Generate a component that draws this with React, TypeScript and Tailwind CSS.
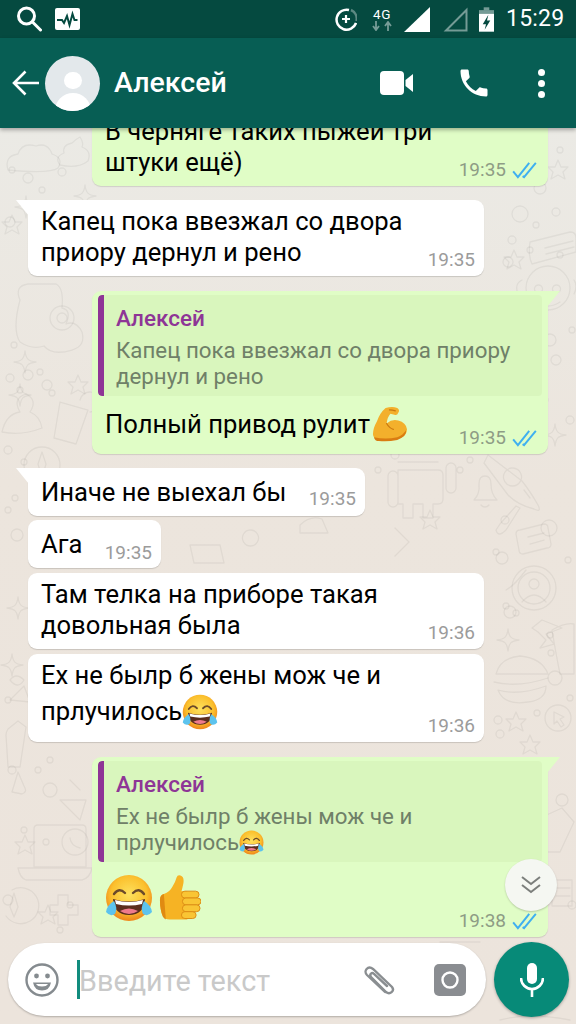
import React, { useId } from "react";

function Joy({ className }: { className: string }) {
  const id = useId();
  return (
    <svg viewBox="0 0 48 48" className={className}>
      <defs>
        <radialGradient id={id} cx="50%" cy="42%" r="56%">
          <stop offset="0%" stopColor="#fde15e" />
          <stop offset="70%" stopColor="#fbc02d" />
          <stop offset="100%" stopColor="#f08a1d" />
        </radialGradient>
      </defs>
      <circle cx="24" cy="24" r="23" fill={`url(#${id})`} />
      <path d="M9 20q5-7 11-1M28 19q6-6 11 1" fill="none" stroke="#6b4a2a" strokeWidth="2.4" strokeLinecap="round" />
      <path d="M8 25q16 5 32 0q-1 16-16 16T8 25z" fill="#5b2e1e" />
      <path d="M10 26q14 4 28 0l-1 4q-13 3-26 0z" fill="#fff" />
      <path d="M15 37q9-5 18 0q-9 6-18 0z" fill="#ef7a8c" />
      <path d="M1 38q1-7 8-11q4 7 1 13q-5 3-9-2z" fill="#5cc3ee" />
      <path d="M47 38q-1-7-8-11q-4 7-1 13q5 3 9-2z" fill="#5cc3ee" />
    </svg>
  );
}

function Thumb({ className }: { className: string }) {
  return (
    <svg viewBox="0 0 44 46" className={className}>
      <path d="M2 25q0-5 4-6q6-2 9-8q3-5 4-9q1-3 4-2q4 1 3 8q-1 5-2 8h6v29H12q-5 0-7-3q-3-7-3-17z" fill="#f6b324" />
      <path d="M2 25q0-5 4-6l2 26q-2-1-3-3q-3-7-3-17z" fill="#e08a12" />
      <rect x="24" y="16" width="18" height="7" rx="3.5" fill="#f9c534" stroke="#dc8c14" />
      <rect x="25" y="23" width="19" height="7" rx="3.5" fill="#f9c534" stroke="#dc8c14" />
      <rect x="25" y="30" width="18" height="7" rx="3.5" fill="#f9c534" stroke="#dc8c14" />
      <rect x="24" y="37" width="15" height="7" rx="3.5" fill="#f9c534" stroke="#dc8c14" />
    </svg>
  );
}

function Muscle({ className }: { className: string }) {
  return (
    <svg viewBox="0 0 36 36" className={className}>
      <path d="M14 1q7-2 12 0q3 2 1 5q-1 3-4 2l-4-1q-3 3-4 10q6-5 12-3q8 2 9 9q0 7-8 9q-11 3-20 2Q1 33 1 28q0-6 4-13q3-9 9-14z" fill="#f3b02c" />
      <path d="M2 31q12 3 24 0q6-2 9-7q1 6-9 10q-10 2-19 1q-4 0-5-4z" fill="#d97c12" />
      <path d="M18 3q3 0 6 1M15 17q3 5 7 6" fill="none" stroke="#c9780f" strokeWidth="1.2" strokeLinecap="round" />
    </svg>
  );
}

function Ticks() {
  return (
    <svg viewBox="0 0 26 18" className="w-[25px] h-[17px] shrink-0">
      <path d="M1 10l5 6L18 1M11 15l1.500 1L25 1" fill="none" stroke="#3fb0f0" strokeWidth="2.100" />
    </svg>
  );
}

function Tail({ side, color }: { side: "l" | "r"; color: string }) {
  return side === "l" ? (
    <span className="absolute left-[-12px] top-0 w-0 h-0 border-t-[16px] border-l-[13px] border-l-transparent" style={{ borderTopColor: color }} />
  ) : (
    <span className="absolute right-[-12px] top-0 w-0 h-0 border-t-[16px] border-r-[13px] border-r-transparent" style={{ borderTopColor: color }} />
  );
}

function InTime({ t }: { t: string }) {
  return <span className="shrink-0 text-[19px] leading-[22px] text-[#9b9b9b] mb-[-3px]">{t}</span>;
}

function OutTime({ t }: { t: string }) {
  return (
    <span className="flex items-center gap-[6px] mr-[2px] shrink-0 text-[19px] leading-[22px] text-[#8e9c85] mb-[-3px]">
      {t}
      <Ticks />
    </span>
  );
}

function Quote({ l1, l2 }: { l1: string; l2: React.ReactNode }) {
  return (
    <div className="flex h-[101px] rounded-[4px] bg-[#d9f6bd] overflow-hidden">
      <div className="w-[6px] bg-[#8e3596] rounded-l-[4px] shrink-0" />
      <div className="pl-[12px] pt-[8px] text-[22.3px] leading-[26px] text-[#6f8068]">
        <div className="text-[#8e3596] font-medium text-[22.5px] leading-[31px] mb-[3px]">Алексей</div>
        <div>{l1}</div>
        <div className="flex items-center h-[26px]">{l2}</div>
      </div>
    </div>
  );
}

const dots: [number, number, number][] = [
  [12, 170, 3],[28, 178, 5],[42, 190, 3],[62, 172, 4],[10, 222, 5],[540, 188, 6],[560, 150, 3],[556, 212, 4],
  [520, 214, 8],[536, 225, 3],[512, 240, 4],[508, 262, 5],[530, 250, 3],[560, 255, 3],[550, 340, 6],[572, 330, 3],[556, 360, 5],
  [14, 345, 3],[10, 378, 4],[28, 375, 5],[47, 385, 5],[52, 393, 3],[20, 390, 3],[40, 372, 3],[545, 400, 3],[570, 420, 4],
  [8, 450, 4],[24, 462, 3],[15, 498, 3],[17, 535, 6],[8, 510, 3],[378, 470, 3],[395, 455, 4],[460, 470, 3],[470, 460, 3],
  [505, 520, 4],[496, 552, 3],[549, 528, 8],[568, 560, 3],[502, 558, 6],[506, 606, 3],[510, 612, 6],[516, 613, 3],
  [550, 635, 3],[551, 653, 3],[555, 678, 7],[570, 698, 3],[498, 720, 4],[537, 713, 3],[500, 734, 4],[8, 700, 3],[12, 770, 4],
  [50, 760, 3],[38, 770, 3],[50, 790, 7],[24, 830, 3],[46, 842, 3],[8, 900, 5],[60, 930, 3],[70, 905, 3],[562, 800, 6],[572, 905, 4],
];

const starD = "M0-11C1-3 3-1 11 0C3 1 1 3 0 11C-1 3-3 1-11 0C-3-1-1-3 0-11Z";
const star5 = "M0-10L3-3L10-3L5 2L7 9L0 5L-7 9L-5 2L-10-3L-3-3Z";

function Wallpaper() {
  return (
    <svg viewBox="0 128 576 896" className="absolute inset-0 w-[576px] h-[896px]" fill="none" stroke="#000" strokeOpacity="0.05" strokeWidth="1.300" strokeLinecap="round" strokeLinejoin="round">
      {dots.map(([x, y, r], i) => (
        <circle key={i} cx={x} cy={y} r={r} />
      ))}
      <path d="M8 170q-4-14 10-16q4-12 18-8q12-4 16 8q12 4 6 14q-8 6-50 2z" />
      <path d="M60 165q-6-8 4-12q-2-8 8-10q4-4 8-6q4 6 2 10q10 4 6 14q-10 8-28 4z" />
      {[[26, 207], [85, 196], [20, 395], [25, 362], [555, 435], [18, 608], [508, 640], [12, 665]].map(([x, y], i) => (
        <path key={i} d={starD} transform={`translate(${x} ${y})`} />
      ))}
      {[[558, 170], [514, 260], [78, 385], [430, 520], [25, 845], [48, 915], [516, 722], [530, 745], [12, 225]].map(([x, y], i) => (
        <path key={i} d={star5} transform={`translate(${x} ${y})`} />
      ))}
      <path d="M530 242l40-10q6 0 6 6v14l-44 12q-4-8-2-22zM545 248l28-7M546 254l28-7" />
      <path d="M526 288a22 22 0 1 1 44 0a22 22 0 1 1-44 0zM522 280q-8 4-4 14M574 280q4 6 0 14M538 285a4 4 0 1 0 1 0M556 285a4 4 0 1 0 1 0M536 302q12 8 24 0" />
      <path d="M20 300q-6-14 8-16h28q8 4 6 24q10 2 4 16q10-4 16 8q4 14-10 18q-20 6-28-4q-12 4-24-4q-8-12 0-42z" />
      <circle cx="62" cy="318" r="12" /><circle cx="62" cy="318" r="5" />
      <path d="M2 432q4-18 18-20q-8-14 6-18q12 6 4 18q10 4 12 16q-20 8-40 4z" />
      <path d="M60 402l28 8l-12 34l-22-6zM80 400a10 10 0 1 1 10 12" />
      <circle cx="42" cy="465" r="18" /><path d="M42 452l4 12l-4 14l-4-14z" />
      <path d="M398 470h40q5 0 5 5v24q0 5-5 5h-5v14h-10v-14h-10v14h-10v-14h-5zM388 476a5 5 0 0 1 10 0v26a5 5 0 0 1-10 0zM446 468a5 5 0 0 1 10 0v20a5 5 0 0 1-10 0zM398 462h40" />
      <path d="M474 500q6-6 5-16q0-8 6-8q6 0 6 8q0 10 6 16zM481 505a5 5 0 0 0 8 0" />
      <path d="M488 455l34 26q8 10 16 24q4 8-4 4q-16-4-26-14l-24-32zM512 468a9 9 0 1 0 1 0M524 490l6 8" />
      <circle cx="534" cy="588" r="22" /><circle cx="534" cy="588" r="16" /><circle cx="534" cy="584" r="5" /><path d="M522 602q12-14 24 0" />
      <path d="M520 530l24-6q4 0 4 4l3 16q0 4-4 4l-24 6q-4 0-4-4l-3-16q0-4 4-4zM528 537l16-4M530 544l14-4" />
      <path d="M496 530q2 8 10 0l14-22l-4-2l-16 18zM506 590q8-4 20-20" />
      <path d="M496 674q4-16 24-18q22 2 28 18zM494 682q24 6 54-4M498 690q20 6 48-4q0 14-18 16q-24 4-30-12z" />
      <circle cx="558" cy="718" r="13" /><path d="M554 712l10 5l-4 2l4 6l-3 2l-4-6l-3 3z" />
      <path d="M552 630q14-8 22-6v50h-14q-4-20-8-44zM542 620l20 8l-16 6l8 10l-14 4l6-8l-8-8l-6-4z" />
      <path d="M6 735q0-3 2-6l10-8l8 6l-6 40l-12 0zM10 700l14-14l6 16zM10 680q6-8 14 0q-6 10-14 0zM60 800l26 0l-6 20zM70 780l10 10" />
      <path d="M38 825h44q4 0 4 4v38H34v-38q0-4 4-4zM18 868h74q-2 10-10 12H26q-6-2-8-12z" />
      <circle cx="75" cy="842" r="13" /><path d="M70 838q1 8 10 10" />
      <path d="M12 890a18 18 0 1 1-6 26M14 893l4 14l-4 10l-4-10zM58 895h10v10h10v10H68v10H58v-10h-8v-10h8z" />
      <path d="M480 924q30 8 60 0M18 772l6 14q4 6-2 8l-10-2zM440 942l40 0M500 1020q30-8 70 0" />
      <path d="M300 525q10-10 22-6l6 14h-28zM190 545l30 0l4 18h-30zM250 530a8 8 0 1 0 1 0M395 528l14 14l-14 14" />
      <path d="M540 818l22-10l12 14l-14 30h-12q-10-14-8-34zM552 880h20v26h-20zM556 888h14M556 896h14" />
    </svg>
  );
}

export default function App() {
  return (
    <div className="relative w-[576px] h-[1024px] overflow-hidden flex flex-col font-[Roboto,sans-serif] text-black">
      {/* Status bar */}
      <div className="h-[38px] shrink-0 bg-[#054a40] flex items-center text-white">
        <svg viewBox="0 0 26 26" className="ml-[16px] w-[26px] h-[26px]" fill="none" stroke="#fff" strokeWidth="3">
          <circle cx="10.500" cy="10" r="8" />
          <path d="M16.500 16l8 8" strokeLinecap="round" />
        </svg>
        <svg viewBox="0 0 25 22" className="ml-[13px] w-[25px] h-[22px]">
          <rect width="25" height="22" rx="2" fill="#fff" />
          <path d="M2 12h5l2 3l3-7l2.500 9l3-11l2 6h3" fill="none" stroke="#054a40" strokeWidth="2" />
        </svg>
        <svg viewBox="0 0 22 24" className="ml-[255px] w-[22px] h-[24px]" fill="none">
          <path d="M14 3a10 10 0 1 0 7 13" stroke="#fff" strokeWidth="2.500" />
          <path d="M16 3a10 10 0 0 1 5.500 11" stroke="#fff" strokeOpacity=".35" strokeWidth="2.500" />
          <path d="M11 8v8M7 12h8" stroke="#fff" strokeWidth="2.200" />
        </svg>
        <div className="ml-[13px] w-[24px] flex flex-col items-center">
          <span className="text-[13.500px] leading-[14px] h-[14px] tracking-[0.5px]">4G</span>
          <svg viewBox="0 0 22 10" className="w-[22px] h-[10px]" fill="none" stroke="#fff" strokeOpacity=".45" strokeWidth="1.800">
            <path d="M5 0v8M2 5l3 4l3-4M17 10V2M14 5l3-4l3 4" />
          </svg>
        </div>
        <svg viewBox="0 0 26 25" className="ml-[10px] w-[26px] h-[25px]">
          <path d="M26 0v25H0z" fill="#fff" />
        </svg>
        <svg viewBox="0 0 25 25" className="ml-[13px] w-[25px] h-[25px]" fill="none">
          <path d="M23.500 3v20.500H3z" stroke="#fff" strokeOpacity=".45" strokeWidth="2" />
        </svg>
        <svg viewBox="0 0 16 26" className="ml-[11px] w-[15px] h-[25px]">
          <path d="M5 0h6v3H5z" fill="#fff" fillOpacity=".45" />
          <path d="M0 3h16v6H0z" fill="#fff" fillOpacity=".45" />
          <path d="M0 7h16v19H0z" fill="#fff" />
          <path d="M10 8l-6 10h3.500L6 24l6-10H8.500z" fill="#054a40" />
        </svg>
        <span className="ml-[12px] text-[23px] leading-[38px] tracking-[0.2px]">15:29</span>
      </div>

      {/* App bar */}
      <div className="relative z-10 h-[90px] shrink-0 bg-[#075e54] flex items-center text-white shadow-[0_2px_4px_rgba(0,0,0,0.3)]">
        <svg viewBox="0 0 27 26" className="ml-[12px] w-[27px] h-[26px]" fill="none" stroke="#fff" strokeWidth="2.600">
          <path d="M27 13H2M13.500 1.500L2 13l11.500 11.500" />
        </svg>
        <div className="ml-[6px] w-[55px] h-[55px] rounded-full bg-[#e3e8eb] overflow-hidden flex flex-col items-center">
          <div className="mt-[16px] w-[18px] h-[20px] rounded-full bg-white" />
          <div className="mt-[4px] w-[36px] h-[20px] rounded-t-full bg-white" />
        </div>
        <span className="ml-[14px] w-[113px] text-[28.500px] font-medium leading-[32px] whitespace-nowrap">Алексей</span>
        <svg viewBox="0 0 33 24" className="ml-[153px] w-[33px] h-[24px]" fill="#fff">
          <rect width="24" height="24" rx="4" />
          <path d="M25.500 9L33 3v18l-7.500-6z" />
        </svg>
        <svg viewBox="0 0 24 24" className="ml-[43px] w-[36px] h-[36px]" fill="#fff">
          <path d="M6.600 10.800c1.400 2.800 3.800 5.100 6.600 6.600l2.200-2.200c.3-.3.700-.4 1-.2 1.100.4 2.300.6 3.600.6.600 0 1 .4 1 1V20c0 .6-.4 1-1 1C10.600 21 3 13.400 3 4c0-.6.400-1 1-1h3.500c.6 0 1 .4 1 1 0 1.300.2 2.500.6 3.600.1.300 0 .7-.2 1z" />
        </svg>
        <div className="ml-[46px] flex flex-col gap-[4px]">
          <span className="w-[7px] h-[7px] rounded-full bg-white" />
          <span className="w-[7px] h-[7px] rounded-full bg-white" />
          <span className="w-[7px] h-[7px] rounded-full bg-white" />
        </div>
      </div>

      {/* Chat */}
      <div className="relative flex-1 min-h-0 overflow-hidden flex flex-col justify-end bg-linear-to-b from-[#ebeae5] via-[#ece5dd] via-40% to-[#ece4dc]">
        <Wallpaper />

        <div className="relative self-end mr-[28px] w-[456px] shrink-0 rounded-[9px] bg-[#e0fdc6] shadow-[0_1px_1px_rgba(0,0,0,0.12)] pl-[13px] pr-[9px] pt-[6px] pb-[8px] flex items-end justify-between text-[25.600px] leading-[31px]">
          <div>
            <div>В черняге таких пыжей три</div>
            <div>штуки ещё)</div>
          </div>
          <OutTime t="19:35" />
        </div>

        <div className="relative ml-[28px] mt-[14px] w-[456px] shrink-0 rounded-[9px] rounded-tl-none bg-white shadow-[0_1px_1px_rgba(0,0,0,0.15)] pl-[13px] pr-[9px] pt-[6px] pb-[8px] flex items-end justify-between text-[25.600px] leading-[31px]">
          <Tail side="l" color="#fff" />
          <div>
            <div>Капец пока ввезжал со двора</div>
            <div>приору дернул и рено</div>
          </div>
          <InTime t="19:35" />
        </div>

        <div className="relative self-end mr-[28px] mt-[15px] w-[456px] h-[163px] shrink-0 rounded-[9px] rounded-tr-none bg-[#e0fdc6] shadow-[0_1px_1px_rgba(0,0,0,0.12)] p-[4px] pr-[6px] pl-[6px] text-[25.600px] leading-[31px]">
          <Tail side="r" color="#e0fdc6" />
          <Quote l1="Капец пока ввезжал со двора приору" l2="дернул и рено" />
          <div className="flex items-center justify-between pl-[7px] pr-[3px] h-[48px] mt-[4px]">
            <div className="flex items-center h-[46px]">
              Полный привод рулит
              <Muscle className="w-[35px] h-[35px] ml-[2px]" />
            </div>
            <div className="self-end mb-[2px]">
              <OutTime t="19:35" />
            </div>
          </div>
        </div>

        <div className="relative ml-[28px] mt-[14px] w-[337px] h-[48px] shrink-0 rounded-[9px] rounded-tl-none bg-white shadow-[0_1px_1px_rgba(0,0,0,0.15)] pl-[13px] pr-[9px] pt-[7px] pb-[8px] flex items-end justify-between text-[25.600px] leading-[31px]">
          <Tail side="l" color="#fff" />
          <div>Иначе не выехал бы</div>
          <div className="mb-[-4px]">
            <InTime t="19:35" />
          </div>
        </div>

        <div className="relative ml-[28px] mt-[4px] w-[133px] h-[48px] shrink-0 rounded-[9px] bg-white shadow-[0_1px_1px_rgba(0,0,0,0.15)] pl-[13px] pr-[9px] pt-[6px] pb-[8px] flex items-end justify-between text-[25.600px] leading-[31px]">
          <div>Ага</div>
          <div className="mb-[-6px]">
            <InTime t="19:35" />
          </div>
        </div>

        <div className="relative ml-[28px] mt-[5px] w-[456px] shrink-0 rounded-[9px] bg-white shadow-[0_1px_1px_rgba(0,0,0,0.15)] pl-[13px] pr-[9px] pt-[6px] pb-[8px] flex items-end justify-between text-[25.600px] leading-[31px]">
          <div>
            <div>Там телка на приборе такая</div>
            <div>довольная была</div>
          </div>
          <InTime t="19:36" />
        </div>

        <div className="relative ml-[28px] mt-[5px] w-[456px] h-[88px] shrink-0 rounded-[9px] bg-white shadow-[0_1px_1px_rgba(0,0,0,0.15)] pl-[13px] pr-[9px] pt-[6px] flex items-end justify-between text-[25.600px] leading-[31px]">
          <div className="self-start">
            <div>Ех не былр б жены мож че и</div>
            <div className="flex items-center h-[41px]">
              прлучилось
              <Joy className="w-[36px] h-[36px]" />
            </div>
          </div>
          <div className="mb-[3px]">
            <InTime t="19:36" />
          </div>
        </div>

        <div className="relative self-end mr-[28px] mt-[15px] w-[456px] h-[180px] shrink-0 rounded-[9px] rounded-tr-none bg-[#e0fdc6] shadow-[0_1px_1px_rgba(0,0,0,0.12)] p-[4px] pr-[6px] pl-[6px] text-[25.600px] leading-[31px]">
          <Tail side="r" color="#e0fdc6" />
          <Quote
            l1="Ех не былр б жены мож че и"
            l2={
              <>
                прлучилось
                <Joy className="w-[25px] h-[25px]" />
              </>
            }
          />
          <div className="flex items-center justify-between pl-[6px] pr-[3px] h-[66px]">
            <div className="flex items-center gap-[4px] mt-[5px]">
              <Joy className="w-[50px] h-[48px]" />
              <Thumb className="w-[43px] h-[46px]" />
            </div>
            <div className="self-end mb-[-1px]">
              <OutTime t="19:38" />
            </div>
          </div>
        </div>

        <div className="relative mt-[5px] mb-[7px] pl-[8px] pr-[7px] flex items-center justify-between shrink-0">
          <div className="h-[73px] w-[478px] rounded-full bg-white shadow-[0_1px_2px_rgba(0,0,0,0.25)] flex items-center">
            <svg viewBox="0 0 34 34" className="ml-[17px] w-[34px] h-[34px]" fill="none">
              <circle cx="17" cy="17" r="15.500" stroke="#858b8f" strokeWidth="2.400" />
              <circle cx="11.500" cy="13" r="2.400" fill="#858b8f" />
              <circle cx="22.500" cy="13" r="2.400" fill="#858b8f" />
              <path d="M8 19.500h18q-1.500 8-9 8t-9-8z" fill="#858b8f" />
              <path d="M11 21h12q-1.500 2.500-6 2.500T11 21z" fill="#fff" />
            </svg>
            <span className="ml-[18px] w-[3px] h-[39px] bg-[#128c7e]" />
            <span className="w-[189px] ml-[-1px] text-[#c9c9c9] text-[28.800px] leading-[32px] mt-[3px] whitespace-nowrap">Введите текст</span>
            <svg viewBox="0 0 34 30" className="ml-[94px] w-[34px] h-[30px]" fill="none" stroke="#8a8e91" strokeWidth="2.400" strokeLinecap="round">
              <path d="M23 27L5 10C1 6 6 0 11 4l19 18c3 4-2 8-6 5L9 12c-2-3 1-5 3-3l13 12" />
            </svg>
            <svg viewBox="0 0 32 32" className="ml-[38px] w-[32px] h-[32px]">
              <rect width="32" height="32" rx="5" fill="#8a8d91" />
              <circle cx="16" cy="16" r="7.500" fill="none" stroke="#fff" strokeWidth="2.400" />
            </svg>
          </div>
          <div className="w-[75px] h-[75px] rounded-full bg-[#078a78] shadow-[0_1px_3px_rgba(0,0,0,0.3)] flex items-center justify-center">
            <svg viewBox="0 0 24 34" className="w-[24px] h-[34px]" fill="none">
              <rect x="7" y="0" width="10" height="21" rx="5" fill="#fff" />
              <path d="M1 15a11 11 0 0 0 22 0M12 26v8" stroke="#fff" strokeWidth="2.600" />
            </svg>
          </div>
          <div className="absolute right-[19px] top-[-83px] w-[52px] h-[52px] rounded-full bg-[#f5f7f2] shadow-[0_1px_2px_rgba(0,0,0,0.2)] flex items-center justify-center">
            <svg viewBox="0 0 20 18" className="w-[20px] h-[18px]" fill="none" stroke="#7c7f7c" strokeWidth="2">
              <path d="M1 1l9 7l9-7M1 9l9 7l9-7" />
            </svg>
          </div>
        </div>
      </div>
    </div>
  );
}
